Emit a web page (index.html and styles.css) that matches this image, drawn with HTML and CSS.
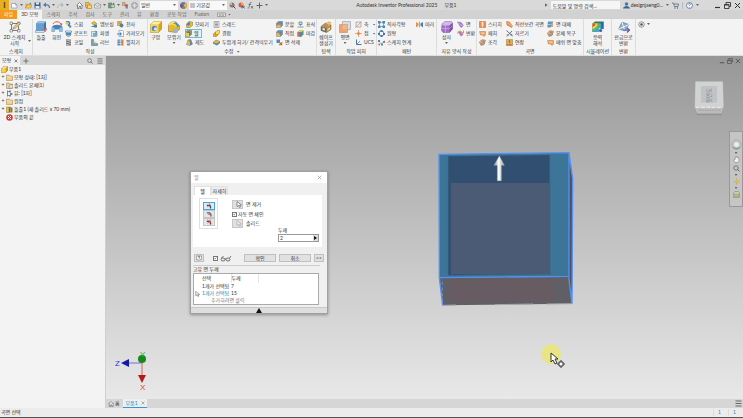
FILE: index.html
```html
<!DOCTYPE html>
<html lang="ko">
<head>
<meta charset="utf-8">
<title>Autodesk Inventor Professional 2025</title>
<meta name="viewport" content="width=device-width, initial-scale=1">
<link rel="stylesheet" href="styles.css">
</head>
<body>
<svg class="sprite" aria-hidden="true">
  <symbol id="new" viewBox="0 0 14 14"><path d="M1 3h8l3 3v6H1z" fill="#fafafa" stroke="#777"/><path d="M9 3v3h3" fill="none" stroke="#777"/></symbol>
  <symbol id="open" viewBox="0 0 14 14"><path d="M1 12V3h4l1 2h6v7z" fill="#e6a93a"/><path d="M1 12l3-6h10l-3 6z" fill="#ffcf5c" stroke="#9c7428"/><path d="M8 3l4-2v4" fill="#3d80b8"/></symbol>
  <symbol id="save" viewBox="0 0 14 14"><path d="M1 1h12v12H1z" fill="#39608c"/><path d="M4 1h6v4H4zM3 8h8v5H3z" fill="#e4edf5"/></symbol>
  <symbol id="undo" viewBox="0 0 14 14"><path d="M13 12c0-6-4-7-8-6" fill="none" stroke="#4679a8" stroke-width="2.4"/><path d="M0 6l6-5v9z" fill="#4679a8"/></symbol>
  <symbol id="redo" viewBox="0 0 14 14"><path d="M1 12c0-6 4-7 8-6" fill="none" stroke="#b5b8bb" stroke-width="2"/><path d="M14 6L8 1v9z" fill="#b5b8bb"/></symbol>
  <symbol id="home" viewBox="0 0 14 14"><path d="M1 7l6-6 6 6M3 6v7h3V9h3v4h3V6" fill="#f4f4f4" stroke="#555" stroke-width="1.3"/></symbol>
  <symbol id="parts" viewBox="0 0 14 14"><path d="M1 1h7l2 3v4H1z" fill="#f4bd35" stroke="#9a7420"/><path d="M5 6h8v7H5z" fill="#ffd657" stroke="#8c6c25"/><path d="M1 9l3 4" stroke="#d05a3c" stroke-width="2"/></symbol>
  <symbol id="mail" viewBox="0 0 14 14"><path d="M1 5l6-3 6 3v7H1zM1 5l6 4 6-4" fill="#e8eaeb" stroke="#777"/></symbol>
  <symbol id="update" viewBox="0 0 14 14"><path d="M1 2h7v10H1z" fill="#6f9d76" stroke="#54725b"/><path d="M6 5h7v6H6z" fill="#bfd5b6" stroke="#597960"/><path d="M10 1l3 3-3 2" fill="#2f75a1"/></symbol>
  <symbol id="select" viewBox="0 0 14 14"><path d="M1 1h5v6H1z" fill="#e8b852" stroke="#7b776d"/><circle cx="9" cy="7" r="3" fill="#d64b3b"/><path d="M7 9h5v4H7z" fill="#5c94c5"/></symbol>
  <symbol id="material" viewBox="0 0 14 14"><circle cx="7" cy="7" r="6" fill="#aeb1b3" stroke="#6f7274"/><path d="M7 1v12M1 7h12M3 3c3 3 5 3 8 0M3 11c3-3 5-3 8 0" fill="none" stroke="#f0f0f0"/></symbol>
  <symbol id="sphere" viewBox="0 0 14 14"><circle cx="7" cy="7" r="6.5" fill="#d94b3d"/><path d="M7 7L1 4a6.500 6.500 0 0 1 10-2z" fill="#3e8cc7"/><path d="M7 7l4-5a6.500 6.500 0 0 1 0 10z" fill="#edb93b"/><path d="M7 7l4 5a6.500 6.500 0 0 1-8 0z" fill="#59a05a"/><path d="M7 7l-4 5a6.500 6.500 0 0 1-2-8z" fill="#704e9c"/></symbol>
  <symbol id="adjust" viewBox="0 0 14 14"><circle cx="6" cy="6" r="5" fill="#4c89bc"/><path d="M6 6l5 0a5 5 0 0 1-5 5z" fill="#e95d45"/><path d="M1 6a5 5 0 0 1 5-5v5z" fill="#edb93b"/><path d="M8 8l5 5" stroke="#414f62" stroke-width="2"/></symbol>
  <symbol id="clear" viewBox="0 0 14 14"><circle cx="6" cy="6" r="5" fill="#d35e4a"/><path d="M6 1a5 5 0 0 1 5 5H6z" fill="#e7b345"/><path d="M6 10h7M8 8l5 5M13 8l-5 5" stroke="#355d99" stroke-width="1.5"/></symbol>
  <symbol id="fx" viewBox="0 0 14 14"><path d="M9 1C6 0 6 3 5 7s-1 6-4 5M3 5h5M8 8l4 5M12 8l-4 5" fill="none" stroke="#555" stroke-width="1.4"/></symbol>
  <symbol id="plus" viewBox="0 0 14 14"><path d="M7 1v12M1 7h12" stroke="#666" stroke-width="2"/></symbol>
  <symbol id="close" viewBox="0 0 14 14"><path d="M2 2l10 10M12 2L2 12" stroke="currentColor" stroke-width="2"/></symbol>
  <symbol id="restore" viewBox="0 0 14 14"><path d="M4 4V1h9v8h-3M1 5h9v8H1zM1 6h9" fill="none" stroke="currentColor" stroke-width="1.8"/></symbol>
  <symbol id="minimize" viewBox="0 0 14 14"><path d="M2 11h10" stroke="currentColor" stroke-width="2.4"/></symbol>
  <symbol id="user" viewBox="0 0 14 14"><circle cx="7" cy="4" r="3.500" fill="#4478ab"/><path d="M0 13c1-7 13-7 14 0z" fill="#376899"/></symbol>
  <symbol id="cart" viewBox="0 0 14 14"><path d="M0 2h3l2 7h7l1-5H4" fill="none" stroke="#4c657c" stroke-width="1.500"/><circle cx="6" cy="12" r="1.300" fill="#4c657c"/><circle cx="11" cy="12" r="1.300" fill="#4c657c"/></symbol>
  <symbol id="help" viewBox="0 0 14 14"><circle cx="7" cy="7" r="6" fill="#f5f8fa" stroke="#476f95" stroke-width="1.500"/><path d="M5 5c0-3 5-2 4 0L7 7v1M7 10v1" fill="none" stroke="#476f95" stroke-width="1.500"/></symbol>
  <symbol id="help-box" viewBox="0 0 14 14"><path d="M1 2h12v9H9l-2 2-2-2H1z" fill="#f7f7f7" stroke="#555"/><path d="M5 5c0-3 5-2 4 0L7 7v1M7 9v1" fill="none" stroke="#444" stroke-width="1.500"/></symbol>
  <symbol id="camera" viewBox="0 0 18 14"><path d="M1 4h16v7H1z" fill="#eee" stroke="#666"/><circle cx="6" cy="7.500" r="2" fill="none" stroke="#666"/><circle cx="12" cy="7.500" r="2" fill="none" stroke="#666"/></symbol>

  <symbol id="sketch" viewBox="0 0 24 24"><path d="M3 5h17M5 2v19M3 19h17M19 9v12" fill="none" stroke="#555" stroke-width="1.500"/><path d="M2 2h5v5H2zM17 2h5v5h-5zM2 17h5v5H2zM17 17h5v5h-5z" fill="#eee" stroke="#555"/><path d="M8 16l1-4L20 2l3 3-11 10z" fill="#eec778" stroke="#6c6557"/></symbol>
  <symbol id="extrude" viewBox="0 0 24 24"><path d="M1 19l6-5h16v4l-5 5H1z" fill="#d4e3ef" stroke="#70869b"/><path d="M2 5l4-4h16v15l-4 4H2z" fill="#3973ae"/><path d="M2 5h16v15H2z" fill="#659dcd"/><path d="M2 5l4-4h16l-4 4z" fill="#9cc5e8"/><path d="M20 22v-7M18 17l2-3 3 3" stroke="#dd4a38" fill="none" stroke-width="2"/></symbol>
  <symbol id="revolve" viewBox="0 0 24 24"><path d="M2 12C4 6 20 6 23 12v9l-6 1v-5H7v5l-6-1z" fill="#4582b9"/><path d="M1 12l6 2v8l-6-1zM17 14l6-2v9l-6 1z" fill="#8fbde0"/><path d="M4 6C7 0 17 0 20 6" fill="none" stroke="#de5944" stroke-width="2"/><path d="M17 5h6l-2 5z" fill="#de5944"/></symbol>
  <symbol id="sweep" viewBox="0 0 14 14"><path d="M2 2c5-3 10 3 5 6l5 4" fill="none" stroke="#347eb8" stroke-width="3"/><circle cx="4" cy="4" r="3" fill="#f0c238"/><circle cx="10" cy="11" r="2.500" fill="#5796c7"/></symbol>
  <symbol id="loft" viewBox="0 0 14 14"><path d="M1 2h12l-2 9-4 2-4-2z" fill="#418cc6" stroke="#376b99"/><path d="M2 2h10v3H2z" fill="#b5d8ef"/><path d="M4 10h6v3H4z" fill="#e6b438"/></symbol>
  <symbol id="coil" viewBox="0 0 14 14"><path d="M2 1h10v12H2z" fill="#666"/><path d="M2 4l10-2M2 8l10-3M2 12l10-3" stroke="#ddd" stroke-width="1.500"/></symbol>
  <symbol id="emboss" viewBox="0 0 14 14"><path d="M1 4l6-3 5 5-5 4z" fill="#eab630" stroke="#917521"/><path d="M6 7l6 1v5H6z" fill="#4782b2"/><path d="M1 11h5" stroke="#4a9757" stroke-width="2"/></symbol>
  <symbol id="derive" viewBox="0 0 14 14"><path d="M1 3h10v10H1z" fill="#dbe6ec" stroke="#607d90"/><path d="M4 6h9v6H4z" fill="#7eaac8"/><path d="M9 1l4 3-4 3z" fill="#4281ac"/></symbol>
  <symbol id="rib" viewBox="0 0 14 14"><path d="M1 1h4v8h8v4H1z" fill="#6da1cb" stroke="#486b89"/><path d="M5 3l6 6H5z" fill="#edbd3b"/></symbol>
  <symbol id="decal" viewBox="0 0 14 14"><path d="M1 1h8v8H1z" fill="#e5c35a" stroke="#857451"/><circle cx="9" cy="9" r="4" fill="#5685aa"/><path d="M4 3l4 4" stroke="#c54c38" stroke-width="2"/></symbol>
  <symbol id="import" viewBox="0 0 14 14"><path d="M4 1h7l2 2v10H4z" fill="#f5f7f8" stroke="#678"/><path d="M0 7h6V4l4 4-4 4V9H0z" fill="#3d89b4"/></symbol>
  <symbol id="unwrap" viewBox="0 0 14 14"><path d="M1 1h6v12H1z" fill="#5c91be"/><path d="M8 1h5v12H8z" fill="#d97e43"/><path d="M3 4h7M3 9h7" stroke="#fff"/></symbol>
  <symbol id="hole" viewBox="0 0 24 24"><path d="M1 7l6-6h16v15l-6 7H1z" fill="#d9a319" stroke="#7b6c39"/><path d="M1 7h16v16H1z" fill="#ffd84c"/><path d="M1 7l6-6h16l-6 6z" fill="#fff09a"/><circle cx="9" cy="15" r="5.500" fill="#5089b8"/><circle cx="11" cy="16" r="3.500" fill="#cbe3f4"/></symbol>
  <symbol id="fillet" viewBox="0 0 24 24"><path d="M1 21V9C3 1 12 1 16 2l7 7v8l-7 6z" fill="#edb826" stroke="#766b45"/><path d="M1 9C3 1 12 1 16 2l7 7-7 3C14 6 7 6 1 9z" fill="#ffe66a"/><path d="M9 5c6 0 9 4 9 9l5-5-7-7z" fill="#5b91bb"/><path d="M10 15h10v8H10z" fill="#91b9d5"/></symbol>
  <symbol id="chamfer" viewBox="0 0 14 14"><path d="M1 6l5-5 7 1v7l-5 4H1z" fill="#efbd2e" stroke="#847132"/><path d="M1 7l5-6 3 5-4 4z" fill="#4a85ba"/></symbol>
  <symbol id="shell" viewBox="0 0 14 14"><path d="M1 4l4-3h8v8l-4 4H1z" fill="#c69835" stroke="#57636b"/><path d="M1 4h8v9H1z" fill="#f1cb51"/><path d="M3 3h8v6L8 11V6H3z" fill="#477fae"/></symbol>
  <symbol id="draft" viewBox="0 0 14 14"><path d="M1 11l3-9 5-1 4 9-5 3z" fill="#5a91be" stroke="#547287"/><path d="M4 2l4 3v8l-7-2z" fill="#e2b948"/><path d="M10 2v10" stroke="#c54f3c"/></symbol>
  <symbol id="thread" viewBox="0 0 14 14"><path d="M2 1h10v12H2z" fill="#eee" stroke="#777"/><path d="M4 4h6M4 7h6M4 10h6" stroke="#777" stroke-width="1.500"/></symbol>
  <symbol id="combine" viewBox="0 0 14 14"><path d="M1 8l4-4h6v4l-4 5H1z" fill="#e3a816" stroke="#8b7427"/><path d="M5 4l3-3h5v5l-3 3H5z" fill="#ffda4f" stroke="#8b7427"/></symbol>
  <symbol id="thicken" viewBox="0 0 14 14"><path d="M0 7l6-5 8 3-6 7z" fill="#ebb838" stroke="#786d4d"/><path d="M0 7l8 2 6-4v3l-6 5-8-4z" fill="#5186b1"/></symbol>
  <symbol id="split" viewBox="0 0 14 14"><path d="M1 4l4-3h8v8l-4 4H1z" fill="#5a94c3" stroke="#54748c"/><path d="M1 7h8v6H1z" fill="#edc044"/><path d="M0 9l13-5" stroke="#d65e48" stroke-width="1.600"/></symbol>
  <symbol id="direct" viewBox="0 0 14 14"><path d="M1 4l3-3h9v8l-4 4H1z" fill="#5a94c3" stroke="#587893"/><path d="M1 6h7v7H1z" fill="#edc044"/><path d="M5 9l5-4" stroke="#d64f3c" stroke-width="2"/></symbol>
  <symbol id="delete-face" viewBox="0 0 14 14"><path d="M1 1h7v7H1z" fill="#4d8bb9"/><path d="M6 6h7v7H6z" fill="#e2c372"/><path d="M7 7l5 5M12 7l-5 5" stroke="#c94335" stroke-width="2"/></symbol>
  <symbol id="mark" viewBox="0 0 14 14"><path d="M4 2h6v5H4zM7 7v3M1 12h12" fill="#d5dce2" stroke="#647b8b" stroke-width="1.500"/></symbol>
  <symbol id="finish" viewBox="0 0 14 14"><path d="M1 4l4-3h8v8l-4 4H1z" fill="#4d9d70"/><path d="M1 4h8v9H1z" fill="#e86b50"/><path d="M1 4l4-3h8L9 4z" fill="#edcf4c"/><path d="M5 4h4v9H5z" fill="#4d83bd"/></symbol>
  <symbol id="shape" viewBox="0 0 24 24"><path d="M2 11l9-7 11 4v9l-9 6-11-4z" fill="#b8914e" stroke="#5f6057"/><path d="M2 11l11 3v9L2 19z" fill="#666f70"/><path d="M5 13l5 2v4l-5-1zM15 16l5-3v3l-5 4z" fill="#f2dda8"/><circle cx="18" cy="5" r="4" fill="#ef923f"/><path d="M18 0v10M13 5h10" stroke="#ffe39b"/></symbol>
  <symbol id="plane" viewBox="0 0 24 24"><path d="M7 1h16v16H7z" fill="#d9dce0" stroke="#888"/><path d="M1 7h16v16H1z" fill="#f2a16c" stroke="#c17845"/><path d="M7 7h10v10H7z" fill="#e4b997"/></symbol>
  <symbol id="axis" viewBox="0 0 14 14"><path d="M2 2h10v10H2z" fill="#eee" stroke="#777"/><path d="M1 13L13 1" stroke="#df8c4c" stroke-width="1.500"/></symbol>
  <symbol id="point" viewBox="0 0 14 14"><path d="M7 0v14M0 7h14" stroke="#e49259" stroke-width="1.500"/><path d="M7 3l4 4-4 4-4-4z" fill="#e98b4c"/></symbol>
  <symbol id="ucs" viewBox="0 0 14 14"><path d="M3 1v10h10" fill="none" stroke="#377bb1" stroke-width="2"/><path d="M3 11l7-7" stroke="#c56445" stroke-width="1.500"/></symbol>
  <symbol id="rect-pattern" viewBox="0 0 14 14"><path d="M3 3h8v8H3z" fill="none" stroke="#4b6f91"/><path d="M0 0h5v5H0zM9 0h5v5H9zM0 9h5v5H0zM9 9h5v5H9z" fill="#4887ba"/></symbol>
  <symbol id="circle-pattern" viewBox="0 0 14 14"><circle cx="7" cy="7" r="5" fill="none" stroke="#578bb4" stroke-width="2"/><path d="M5 0h4v4H5zM0 6h4v4H0zM10 6h4v4h-4zM5 10h4v4H5z" fill="#397cac"/></symbol>
  <symbol id="sketch-pattern" viewBox="0 0 14 14"><path d="M1 11c2-8 6 4 12-8" fill="none" stroke="#666"/><path d="M0 2h4v4H0zM6 9h4v4H6z" fill="#478abd"/><path d="M10 4h4v4h-4zM1 10h3v3H1z" fill="#dc6949"/></symbol>
  <symbol id="mirror" viewBox="0 0 14 14"><path d="M0 2l5 3v4l-5 4z" fill="#e49245"/><path d="M14 2L9 5v4l5 4z" fill="#467fb9"/><path d="M7 1v12" stroke="#555"/></symbol>
  <symbol id="box" viewBox="0 0 24 24"><path d="M2 6l6-5h13l2 3v12l-6 7H4l-3-4z" fill="#a171c5" stroke="#73518d"/><path d="M2 6l6-5h13l2 3-6 5H3z" fill="#d4b4ee"/><path d="M17 9l6-5v12l-6 7z" fill="#7b549f"/><path d="M9 8v15M1 15h16l6-6M6 3l11 4" fill="none" stroke="#e0c4f3"/></symbol>
  <symbol id="ff-face" viewBox="0 0 14 14"><path d="M1 2l7 1 5 6-5 4z" fill="#a87cc9" stroke="#72579a"/><path d="M1 2l7 6 5 1" fill="none" stroke="#eee"/></symbol>
  <symbol id="convert" viewBox="0 0 14 14"><path d="M1 3h6l6 6-5 4z" fill="#aa7fc5"/><path d="M1 7c2-6 8-6 10-1M8 6h5V1" fill="none" stroke="#e48a45" stroke-width="2"/></symbol>
  <symbol id="stitch" viewBox="0 0 14 14"><path d="M1 1h12v12H1z" fill="#e98b4a" stroke="#b96532"/><path d="M7 1v12M4 4h6M4 8h6" stroke="#fff" stroke-width="1.300"/></symbol>
  <symbol id="patch" viewBox="0 0 14 14"><path d="M1 3h12v7l-3 3-3-3H3z" fill="#eda05d" stroke="#c0763d"/><path d="M3 5h8v3H5z" fill="#f9ca99"/></symbol>
  <symbol id="sculpt" viewBox="0 0 14 14"><path d="M1 7c2-6 7-7 12-4l-3 8-6 2z" fill="#e79655" stroke="#ae693a"/><circle cx="8" cy="8" r="3.500" fill="#6897b4"/><path d="M2 5l8 4" stroke="#ffddb7"/></symbol>
  <symbol id="ruled" viewBox="0 0 14 14"><path d="M1 1l6 1 6 8-2 3-9-5z" fill="#e98948" stroke="#b86b3d"/><path d="M2 3l9 8M5 3l7 6" stroke="#ffd3a8"/></symbol>
  <symbol id="trim" viewBox="0 0 14 14"><path d="M1 1l12 11M2 13L12 2" stroke="#55728d" stroke-width="2"/><circle cx="3" cy="10" r="2" fill="#db8753"/><circle cx="11" cy="10" r="2" fill="#4c90be"/></symbol>
  <symbol id="extend" viewBox="0 0 14 14"><path d="M1 1h12v12H1z" fill="#e1b24c" stroke="#8c784b"/><path d="M1 10h12v3H1z" fill="#d87a4b"/><path d="M7 9V3M5 5l2-2 2 2" stroke="#45545c" fill="none"/></symbol>
  <symbol id="replace" viewBox="0 0 14 14"><path d="M2 1h11L9 7H1zM1 8h9l-3 5H1z" fill="#5f96bd"/><path d="M10 4v8" stroke="#e48b45" stroke-width="3"/></symbol>
  <symbol id="stress" viewBox="0 0 24 24"><path d="M1 5l5-4h17v15l-5 6H1z" fill="#36785d"/><path d="M1 5h17v17H1z" fill="#47a4cc"/><path d="M1 5h14C14 13 9 18 1 20z" fill="#69bd4e"/><path d="M1 5h10C10 11 7 14 1 16z" fill="#f3db3e"/><path d="M1 5h6c0 4-2 6-6 7z" fill="#e65335"/><path d="M18 5l5-4v15l-5 6z" fill="#3267ae"/><path d="M14 15l9 7M14 22l9-6" stroke="#e9edf2" stroke-width="3"/><circle cx="17" cy="19" r="3" fill="#356a9b"/></symbol>
  <symbol id="sheetmetal" viewBox="0 0 24 24"><path d="M1 16L8 2l14 5-8 13z" fill="#82add0" stroke="#526f8a"/><path d="M8 2l3 10 11-5M1 16l10-4 3 8" fill="none" stroke="#eef5fa" stroke-width="2"/><path d="M11 18h11M18 14l5 4-5 5" fill="none" stroke="#665d9d" stroke-width="2.500"/></symbol>
  <symbol id="target" viewBox="0 0 14 14"><circle cx="7" cy="7" r="5.500" fill="#eee" stroke="#777" stroke-width="1.500"/><circle cx="7" cy="7" r="2.500" fill="#555"/></symbol>

  <symbol id="part" viewBox="0 0 14 14"><path d="M1 5l4-4h8v8l-4 4H1z" fill="#d59f1e" stroke="#826624"/><path d="M1 5h8v8H1z" fill="#ffd045"/><path d="M1 5l4-4h8L9 5z" fill="#ffe891"/></symbol>
  <symbol id="folder" viewBox="0 0 14 14"><path d="M1 2h5l1 2h6v9H1z" fill="#efcf91" stroke="#9b7b4d"/><path d="M2 6h10" stroke="#fff0cb"/></symbol>
  <symbol id="bodies" viewBox="0 0 14 14"><path d="M1 2h5l1 2h6v9H1z" fill="#efcf91" stroke="#9b7b4d"/><path d="M6 8l3-3h5v5l-3 3H6z" fill="#d9dcdd" stroke="#777"/></symbol>
  <symbol id="views" viewBox="0 0 14 14"><path d="M3 1v12M3 3h4M3 11h4" stroke="#526d82" stroke-width="1.500"/><path d="M6 1h4v4H6zM8 6h5v4H8zM6 10h4v3H6z" fill="#718da1"/></symbol>
  <symbol id="extrusion" viewBox="0 0 14 14"><path d="M1 2h5v11H1z" fill="#f0c43b" stroke="#8b7426"/><path d="M6 2l3-1v12H6z" fill="#b34c35"/><path d="M9 3h4v10H9z" fill="#588f57"/></symbol>
  <symbol id="end" viewBox="0 0 14 14"><circle cx="7" cy="7" r="6.500" fill="#cf3d39"/><path d="M4 4l6 6M10 4l-6 6" stroke="#fff" stroke-width="2"/></symbol>
  <symbol id="search" viewBox="0 0 14 14"><circle cx="6" cy="6" r="4.500" fill="none" stroke="#666" stroke-width="1.600"/><path d="M9 9l4 4" stroke="#666" stroke-width="2"/></symbol>
  <symbol id="menu" viewBox="0 0 14 14"><path d="M1 2h12M1 7h12M1 12h12" stroke="#666" stroke-width="2"/></symbol>
  <symbol id="pointer" viewBox="0 0 14 14"><path d="M4 1v10l3-2 2 4 2-1-2-4h4z" fill="#fff" stroke="currentColor"/></symbol>
  <symbol id="shell-in" viewBox="0 0 14 14"><path d="M2 4h7l3 3v6H9V8L7 7H2z" fill="#354a60"/><path d="M3 9l4-3M8 1l2 5" stroke="#df4c40" stroke-width="2"/></symbol>
  <symbol id="shell-out" viewBox="0 0 14 14"><path d="M2 3h7l4 4v6h-3V8L8 6H2z" fill="#536373"/><path d="M6 9l4-4" stroke="#df4c40" stroke-width="2.500"/></symbol>
  <symbol id="shell-both" viewBox="0 0 14 14"><path d="M2 4h7l3 3v6H9V8L7 7H2z" fill="#354a60"/><path d="M3 2l9 8M11 1L4 10" stroke="#df4c40" stroke-width="2"/></symbol>
  <symbol id="glasses" viewBox="0 0 22 14"><ellipse cx="5" cy="9" rx="4" ry="3" fill="none" stroke="#444" stroke-width="1.500"/><ellipse cx="15" cy="9" rx="4" ry="3" fill="none" stroke="#444" stroke-width="1.500"/><path d="M9 8h2M2 6l4-4M18 6l3-4" stroke="#444" stroke-width="1.500" fill="none"/></symbol>
  <symbol id="wheel" viewBox="0 0 24 24"><circle cx="12" cy="12" r="10" fill="#c9cbc9" stroke="#888"/><circle cx="12" cy="12" r="6" fill="#eee" stroke="#aaa"/><path d="M4 18c5 4 11 4 16 0" fill="none" stroke="#75a980" stroke-width="3"/></symbol>
  <symbol id="hand" viewBox="0 0 14 14"><path d="M4 13L1 8l2-1 1 1V3h2V1h2v2h2v1h2v6l-2 3z" fill="#eee" stroke="#777"/></symbol>
  <symbol id="orbit" viewBox="0 0 14 14"><path d="M7 1v12M2 9c3-5 8-5 11 0" fill="none" stroke="#777"/><path d="M7 2l5 5-5 4-5-4z" fill="#e5bd3c"/></symbol>
  <symbol id="look" viewBox="0 0 14 14"><path d="M1 4l3-3h7l2 3v9H1z" fill="#cfd0c8" stroke="#777"/><path d="M3 6h8v5H3z" fill="#d2bb5c" stroke="#848a75"/></symbol>
</svg>

<div class="app">
  <header class="titlebar">
    <div class="quick">
      <button class="logo" aria-label="Inventor">I</button>
      <button class="ic" aria-label="새로 만들기"><svg><use href="#new"/></svg></button><i class="caret"></i>
      <button class="ic" aria-label="열기"><svg><use href="#open"/></svg></button>
      <button class="ic" aria-label="저장"><svg><use href="#save"/></svg></button>
      <button class="ic" aria-label="명령취소"><svg><use href="#undo"/></svg></button><i class="caret"></i>
      <button class="ic" aria-label="명령복구"><svg><use href="#redo"/></svg></button><i class="caret"></i>
      <i class="divider"></i>
      <button class="ic" aria-label="홈"><svg><use href="#home"/></svg></button>
      <button class="ic" aria-label="부품"><svg><use href="#parts"/></svg></button>
      <button class="ic" aria-label="공유"><svg><use href="#mail"/></svg></button><i class="caret"></i>
      <button class="ic" aria-label="업데이트"><svg><use href="#update"/></svg></button><i class="caret"></i>
      <button class="ic" aria-label="선택"><svg><use href="#select"/></svg></button>
      <button class="ic" aria-label="재질"><svg><use href="#material"/></svg></button>
      <span class="combo"><select aria-label="재질 이름"><option>일반</option></select></span>
      <button class="ic" aria-label="모양"><svg><use href="#sphere"/></svg></button>
      <span class="combo"><select aria-label="모양 이름"><option>▤ 기본값</option></select></span>
      <button class="ic" aria-label="조정"><svg><use href="#adjust"/></svg></button>
      <button class="ic" aria-label="지우기"><svg><use href="#clear"/></svg></button>
      <button class="ic" aria-label="매개변수"><svg><use href="#fx"/></svg></button>
      <button class="ic" aria-label="추가"><svg><use href="#plus"/></svg></button><i class="caret"></i>
    </div>
    <div class="title"><span>Autodesk Inventor Professional 2025</span><span>부품1</span></div>
    <div class="account">
      <i class="caret side"></i>
      <input type="search" aria-label="검색" value="도움말 및 명령 검색...">
      <button class="user"><svg><use href="#user"/></svg>designjaeng0...</button><i class="caret"></i>
      <button class="ic" aria-label="스토어"><svg><use href="#cart"/></svg></button><i class="rule"></i>
      <button class="ic" aria-label="도움말"><svg><use href="#help"/></svg></button><i class="caret"></i>
      <div class="window">
        <button class="ic" aria-label="최소화"><svg><use href="#minimize"/></svg></button>
        <button class="ic" aria-label="복원"><svg><use href="#restore"/></svg></button>
        <button class="ic" aria-label="닫기"><svg><use href="#close"/></svg></button>
      </div>
    </div>
  </header>

  <nav class="tabs">
    <button class="file">파일</button><button class="active">3D 모형</button><button>스케치</button><button>주석</button><button>검사</button><button>도구</button><button>관리</button><button>뷰</button><button>환경</button><button>공동 작업</button><button>Fusion</button>
    <button class="cam" aria-label="화면"><svg><use href="#camera"/></svg></button><i class="caret"></i>
  </nav>

  <div class="ribbon">
    <section class="panel p-sketch"><div class="tools">
      <button class="big"><svg><use href="#sketch"/></svg><span>2D 스케치<br>시작</span></button><i class="caret"></i>
    </div><h2>스케치</h2></section>
    <section class="panel p-create"><div class="tools">
      <button class="big"><svg><use href="#extrude"/></svg><span>돌출</span></button>
      <button class="big"><svg><use href="#revolve"/></svg><span>회전</span></button>
      <div class="stack"><button><svg><use href="#sweep"/></svg>스윕</button><button><svg><use href="#loft"/></svg>로프트</button><button><svg><use href="#coil"/></svg>코일</button></div>
      <div class="stack"><button><svg><use href="#emboss"/></svg>엠보싱</button><button><svg><use href="#derive"/></svg>파생</button><button><svg><use href="#rib"/></svg>리브</button></div>
      <div class="stack"><button><svg><use href="#decal"/></svg>전사</button><button><svg><use href="#import"/></svg>가져오기</button><button><svg><use href="#unwrap"/></svg>펼치기</button></div>
    </div><h2>작성</h2></section>
    <section class="panel p-modify"><div class="tools">
      <button class="big"><svg><use href="#hole"/></svg><span>구멍</span></button>
      <button class="big"><svg><use href="#fillet"/></svg><span>모깎기</span><i class="caret"></i></button>
      <div class="stack"><button><svg><use href="#chamfer"/></svg>모따기</button><button class="current"><svg><use href="#shell"/></svg>쉘</button><button><svg><use href="#draft"/></svg>제도</button></div>
      <div class="stack"><button><svg><use href="#thread"/></svg>스레드</button><button><svg><use href="#combine"/></svg>결합</button><button><svg><use href="#thicken"/></svg>두껍게 하기/ 간격띄우기</button></div>
      <div class="stack"><button><svg><use href="#split"/></svg>분할</button><button><svg><use href="#direct"/></svg>직접</button><button><svg><use href="#delete-face"/></svg>면 삭제</button></div>
      <div class="stack"><button><svg><use href="#mark"/></svg>표식</button><button><svg><use href="#finish"/></svg>마감</button></div>
    </div><h2>수정 <i class="caret"></i></h2></section>
    <section class="panel p-explore"><div class="tools">
      <button class="big"><svg><use href="#shape"/></svg><span>쉐이프<br>생성기</span></button>
    </div><h2>탐색</h2></section>
    <section class="panel p-work"><div class="tools">
      <button class="big"><svg><use href="#plane"/></svg><span>평면</span><i class="caret"></i></button>
      <div class="stack"><button><svg><use href="#axis"/></svg>축 <i class="caret"></i></button><button><svg><use href="#point"/></svg>점 <i class="caret"></i></button><button><svg><use href="#ucs"/></svg>UCS</button></div>
    </div><h2>작업 피처</h2></section>
    <section class="panel p-pattern"><div class="tools">
      <div class="stack"><button><svg><use href="#rect-pattern"/></svg>직사각형</button><button><svg><use href="#circle-pattern"/></svg>원형</button><button><svg><use href="#sketch-pattern"/></svg>스케치 연계</button></div>
      <div class="stack"><button><svg><use href="#mirror"/></svg>미러</button></div>
    </div><h2>패턴</h2></section>
    <section class="panel p-free"><div class="tools">
      <button class="big"><svg><use href="#box"/></svg><span>상자</span><i class="caret"></i></button>
      <div class="stack"><button><svg><use href="#ff-face"/></svg>면</button><button><svg><use href="#convert"/></svg>변환</button></div>
    </div><h2>자유 양식 작성</h2></section>
    <section class="panel p-surface"><div class="tools">
      <div class="stack"><button><svg><use href="#stitch"/></svg>스티치</button><button><svg><use href="#patch"/></svg>패치</button><button><svg><use href="#sculpt"/></svg>조각</button></div>
      <div class="stack"><button><svg><use href="#ruled"/></svg>직선보간 곡면</button><button><svg><use href="#trim"/></svg>자르기</button><button><svg><use href="#extend"/></svg>연장</button></div>
      <div class="stack"><button><svg><use href="#replace"/></svg>면 대체</button><button><svg><use href="#sculpt"/></svg>본체 복구</button><button><svg><use href="#patch"/></svg>메쉬 면 맞춤</button></div>
    </div><h2>곡면</h2></section>
    <section class="panel p-sim"><div class="tools">
      <button class="big"><svg><use href="#stress"/></svg><span>응력<br>해석</span></button>
    </div><h2>시뮬레이션</h2></section>
    <section class="panel p-convert"><div class="tools">
      <button class="big"><svg><use href="#sheetmetal"/></svg><span>판금으로<br>변환</span></button>
    </div><h2>변환</h2></section>
    <div class="extra"><button class="ic" aria-label="표시"><svg><use href="#target"/></svg></button><i class="caret"></i></div>
  </div>

  <main class="work">
    <aside class="browser">
      <div class="browser-tabs"><button class="model-tab">모형 <svg><use href="#close"/></svg></button><button class="ic" aria-label="탭 추가"><svg><use href="#plus"/></svg></button><span class="push"></span><button class="ic" aria-label="찾기"><svg><use href="#search"/></svg></button><button class="ic" aria-label="메뉴"><svg><use href="#menu"/></svg></button></div>
      <ul class="tree">
        <li class="root"><svg><use href="#part"/></svg>부품1</li>
        <li><b>+</b><svg><use href="#folder"/></svg>모형 상태: [1차]</li>
        <li><b>+</b><svg><use href="#bodies"/></svg>솔리드 본체(1)</li>
        <li><b>+</b><svg><use href="#views"/></svg>뷰: [1차]</li>
        <li><b>+</b><svg><use href="#folder"/></svg>원점</li>
        <li><b>+</b><svg><use href="#extrusion"/></svg>돌출1 (새 솔리드 x 70 mm)</li>
        <li><b></b><svg><use href="#end"/></svg>부품의 끝</li>
      </ul>
    </aside>

    <div class="stage">
      <div class="viewport">
        <div class="doc-window"><button class="ic" aria-label="문서 최소화"><svg><use href="#minimize"/></svg></button><button class="ic" aria-label="문서 복원"><svg><use href="#restore"/></svg></button><button class="ic" aria-label="문서 닫기"><svg><use href="#close"/></svg></button></div>

        <svg class="viewcube" viewBox="0 0 96 108" role="img" aria-label="뷰 큐브">
          <path d="M6 86l6 16h72l6-16-4 20H12z" fill="#777" opacity=".4"/>
          <path d="M6 82h85l-5 18H12z" fill="#bcbcbc"/>
          <path d="M8 5h81l2 77H6z" fill="#d1d2d2" stroke="#dedede"/>
          <path d="M24 18h48v50H24z" fill="#bfc3c8"/>
          <path d="M8 82h81" stroke="#eee" stroke-width="3" stroke-dasharray="12 4"/>
          <path d="M15 91h68" stroke="#999" stroke-width="2" stroke-dasharray="5 2"/>
          <text transform="translate(55 70) rotate(-90)" class="cube-text">윗면도</text>
        </svg>

        <div class="navbar">
          <button class="wheel" aria-label="탐색 휠"><svg><use href="#wheel"/></svg></button><i class="caret"></i>
          <button class="ic" aria-label="초점이동"><svg><use href="#hand"/></svg></button>
          <button class="ic" aria-label="줌"><svg><use href="#search"/></svg></button><i class="caret"></i>
          <button class="ic" aria-label="궤도"><svg><use href="#orbit"/></svg></button><i class="caret"></i>
          <button class="ic" aria-label="면 보기"><svg><use href="#look"/></svg></button>
        </div>

        <svg class="model" viewBox="0 0 450 495" role="img" aria-label="솔리드 모형">
          <defs><linearGradient id="arrow"><stop offset="0" stop-color="#888"/><stop offset=".45" stop-color="#fff"/><stop offset="1" stop-color="#999"/></linearGradient></defs>
          <path d="M416 23l12 78-2 375-10-82z" fill="#4f5064"/>
          <path d="M28 398l388-4 10 82-388 5z" fill="#605f66"/>
          <path d="M57 402h308l3 64-306 4z" fill="#665c61" stroke="#765762"/>
          <path d="M27 28l390-5v371l-389 4z" fill="#3d7598"/>
          <path d="M54 34l305-4v357l-305 4z" fill="#315071"/>
          <path d="M63 114h296v273H63z" fill="#4b5b76"/>
          <path d="M55 35v356M359 30v357M56 390l308-3" fill="none" stroke="#36647f" stroke-width="2"/>
          <path d="M27 28l390-5v371l-389 4zM28 398l10 83M416 394l10 82M417 23l11 78-2 375" fill="none" stroke="#5591f1" stroke-width="4"/>
          <path d="M37 410v60" stroke="#7da2da" stroke-width="2" stroke-dasharray="10 7"/>
          <path d="M38 481l40-1M195 479l114-2M350 477l75-1" stroke="#a4a5ae" stroke-width="3"/>
          <path d="M202 107V61h-10l16-28 15 28h-9v46z" fill="url(#arrow)" stroke="#bbb"/>
        </svg>

        <svg class="triad" viewBox="0 0 40 50" role="img" aria-label="좌표축">
          <path d="M10 19h17" stroke="#7475ca"/><path d="M6 19l8-4v8z" fill="#1717a9"/>
          <path d="M27 19v14" stroke="#c66"/><path d="M23 31h8l-4 8z" fill="#b71919"/>
          <circle cx="27" cy="15" r="4" fill="#168820"/>
          <text x="25" y="13" fill="#21b22b">Y</text><text x="0" y="22" fill="#3333dd">Z</text><text x="25" y="46" fill="#ef3b2f">X</text>
        </svg>

        <svg class="cursor" viewBox="0 0 26 28" aria-hidden="true">
          <circle cx="11" cy="11" r="10" fill="#e9e485"/>
          <path d="M11 10v9l2-2 2 4 2-1-2-4h3z" fill="#fff" stroke="#333"/>
          <path d="M20 18h2v2h2v2h-2v2h-2v-2h-2v-2h2z" fill="#fff" stroke="#333"/>
        </svg>

        <form class="dialog">
          <div class="dialog-head"><span>쉘</span><button type="button" class="ic" aria-label="대화상자 닫기"><svg><use href="#close"/></svg></button></div>
          <div class="dialog-body">
            <div class="dialog-tabs"><button type="button" class="active">쉘</button><button type="button">자세히</button></div>
            <div class="page">
              <div class="modes">
                <button type="button" class="active" aria-label="내부"><svg><use href="#shell-in"/></svg></button>
                <button type="button" aria-label="외부"><svg><use href="#shell-out"/></svg></button>
                <button type="button" aria-label="양쪽"><svg><use href="#shell-both"/></svg></button>
              </div>
              <div class="picks">
                <div class="pick"><button type="button" id="remove"><svg><use href="#pointer"/></svg></button><label for="remove">면 제거</label></div>
                <label class="check"><input type="checkbox" checked>자동 면 체인</label>
                <div class="pick off"><button type="button" id="solid"><svg><use href="#pointer"/></svg></button><label for="solid">솔리드</label></div>
              </div>
              <div class="thickness"><label for="thick">두께</label><div class="field"><input id="thick" type="text" value="2"><button type="button" aria-label="두께 옵션"><i class="caret side"></i></button></div></div>
            </div>
            <div class="actions">
              <button type="button" class="tiny" aria-label="도움말"><svg><use href="#help-box"/></svg></button>
              <label class="check preview"><input type="checkbox" checked aria-label="미리보기"><svg><use href="#glasses"/></svg></label>
              <button type="button" class="wide">확인</button><button type="button" class="wide">취소</button><button type="button" class="tiny">&lt;&lt;</button>
            </div>
            <h3>고유 면 두께</h3>
            <div class="list">
              <table>
                <thead><tr><th></th><th>선택</th><th>두께</th><th></th></tr></thead>
                <tbody>
                  <tr><td></td><td>1개가 선택됨</td><td>7</td><td></td></tr>
                  <tr><td><svg><use href="#pointer"/></svg></td><td class="picked">1개가 선택됨</td><td>15</td><td></td></tr>
                  <tr><td></td><td class="hint" colspan="3">추가하려면 클릭</td></tr>
                </tbody>
              </table>
            </div>
          </div>
          <button type="button" class="fold" aria-label="접기"></button>
        </form>
      </div>
      <div class="doc-tabs"><button class="home-tab"><svg><use href="#home"/></svg>홈</button><button class="active">부품1 <svg><use href="#close"/></svg></button><span class="push"></span><button class="ic" aria-label="문서 메뉴"><svg><use href="#menu"/></svg></button></div>
    </div>
  </main>
  <footer class="status"><span>곡면 선택</span><span class="push"></span><span class="count">1</span><span class="count">1</span></footer>
</div>
</body>
</html>
```
FILE: styles.css
```css
* { box-sizing: border-box; }

body {
  margin: 0;
  font: 5px/7px Lato, "Noto Sans CJK KR", sans-serif;
  color: #333;
  background: #ececec;
}

button, input, select {
  margin: 0;
  padding: 0;
  border: 0;
  border-radius: 0;
  background: none;
  font: inherit;
  color: inherit;
  white-space: nowrap;
}

h2, h3, ul { margin: 0; padding: 0; font: inherit; list-style: none; }
svg { display: block; flex: none; width: 7px; height: 7px; }
.sprite { position: absolute; width: 0; height: 0; }
.push { flex: 1; }
.ic { flex: none; width: 7px; height: 7px; }

.caret {
  display: inline-block;
  flex: none;
  width: 3px;
  height: 2px;
  background: #666;
  clip-path: polygon(0 0, 100% 0, 50% 100%);
}
.caret.side { height: 4px; clip-path: polygon(0 0, 100% 50%, 0 100%); }

.app { display: flex; flex-direction: column; height: 100vh; overflow: hidden; }

/* Title bar */
.titlebar {
  display: flex;
  justify-content: space-between;
  align-items: center;
  height: 10px;
  background: #d9d9d9;
}
.quick, .account, .title, .window { display: flex; align-items: center; white-space: nowrap; }
.quick { gap: 2px; }
.logo { width: 9px; height: 10px; background: #e9ad20; color: #4e390b; font-weight: 700; font-size: 8px; }
.divider { width: 3px; }
.title { gap: 7px; }
.combo { display: flex; align-items: center; width: 38px; height: 9px; background: #f8f8f8; }
.combo select { flex: 1; min-width: 0; height: 9px; padding: 0 1px; appearance: none; }
.combo::after { content: ""; width: 3px; height: 2px; margin-right: 2px; background: #666; clip-path: polygon(0 0, 100% 0, 50% 100%); }
.account { gap: 3px; }
.account input { width: 69px; height: 8px; padding: 0 2px; background: #f5f5f5; appearance: none; outline: 0; }
.user { display: flex; align-items: center; gap: 1px; min-width: 39px; }
.rule { width: 1px; height: 7px; background: #bbb; }
.window { gap: 3px; margin-left: 12px; padding-right: 2px; }

/* Ribbon tabs */
.tabs { display: flex; align-items: center; height: 9px; background: #d2d2d2; }
.tabs > button { height: 9px; padding: 0 4px; color: #666; }
.tabs > .file { background: #f39a1f; color: #fff3dc; }
.tabs > .active { background: #f3f3f3; color: #444; }
.tabs > .cam { margin: 0 2px 0 4px; padding: 1px 0; }
.cam svg { width: 9px; }

/* Ribbon */
.ribbon { display: flex; height: 37px; background: #f3f3f3; border-bottom: 1px solid #dedede; }
.panel { display: flex; flex-direction: column; flex: none; border-right: 1px solid #dcdcdc; }
.panel h2 { height: 7px; text-align: center; white-space: nowrap; }
.panel h2 .caret, .stack .caret { margin-left: 2px; vertical-align: middle; }
.tools { display: grid; height: 29px; padding-top: 1px; }
.tools button { display: flex; }
.big { flex-direction: column; align-items: center; line-height: 6px; text-align: center; }
.big svg { width: 12px; height: 12px; margin: 1px 0; }
.big .caret { margin-top: 2px; }
.stack { display: grid; grid-template-rows: repeat(3, 9px); }
.stack button { align-items: center; gap: 2px; padding-left: 1px; }
.stack .current { width: 17px; padding-left: 0; background: #e3f3f6; outline: 1px solid #68bfd2; outline-offset: -1px; }
.p-sketch { width: 33px; }
.p-sketch .tools { grid-template-columns: 27px 3px; padding-left: 1px; }
.p-sketch .tools > .caret { margin-top: 20px; }
.p-create { width: 115px; }
.p-create .tools { grid-template-columns: 16px 15px 26px 26px 1fr; }
.p-modify { width: 169px; }
.p-modify .tools { grid-template-columns: 15px 22px 27px 63px 21px 1fr; }
.p-explore { width: 19px; }
.p-work { width: 41px; }
.p-work .tools { grid-template-columns: 18px 1fr; }
.p-pattern { width: 60px; }
.p-pattern .tools { grid-template-columns: 38px 1fr; }
.p-free { width: 40px; }
.p-free .tools { grid-template-columns: 19px 1fr; }
.p-surface { width: 107px; }
.p-surface .tools { grid-template-columns: 27px 41px 1fr; padding-left: 1px; }
.p-sim { width: 28px; }
.p-convert { width: 24px; }
.extra { display: flex; align-items: center; gap: 2px; height: 10px; padding-left: 2px; }

/* Work area */
.work { display: flex; flex: 1; min-height: 0; }
.browser { flex: none; width: 106px; background: #f3f3f3; border-right: 1px solid #d0d0d0; }
.browser-tabs { display: flex; align-items: center; gap: 3px; height: 9px; padding-right: 1px; background: #d6d6d6; }
.model-tab { display: flex; align-items: center; gap: 3px; height: 9px; width: 20px; padding-left: 2px; background: #f3f3f3; }
.model-tab svg, .doc-tabs .active svg { width: 4px; height: 4px; }
.browser-tabs .ic svg { width: 6px; height: 6px; }
.tree li { display: flex; align-items: center; gap: 1px; height: 8px; padding-left: 1px; white-space: nowrap; }
.tree b { width: 4px; font-weight: 400; text-align: center; }

.stage { display: flex; flex: 1; flex-direction: column; min-width: 0; }
.viewport {
  position: relative;
  flex: 1;
  overflow: hidden;
  background: linear-gradient(#979797, #e8e8e8);
}
.doc-window { position: absolute; top: 1px; right: 1px; display: flex; gap: 1px; color: #555; }
.doc-window svg { width: 6px; height: 6px; }
.viewcube { position: absolute; top: 24px; right: 18px; width: 32px; height: 36px; }
.cube-text { font-size: 17px; fill: #85888c; }
.navbar {
  position: absolute;
  top: 75px;
  right: 0;
  display: flex;
  flex-direction: column;
  align-items: center;
  gap: 2px;
  width: 14px;
  padding: 7px 0 8px;
  background: #c5c5c5;
  border: 1px solid #999;
}
.wheel, .wheel svg { width: 11px; height: 11px; }
.model { position: absolute; top: 89px; left: 324px; width: 150px; height: 165px; }
.triad { position: absolute; left: 9px; bottom: 5px; width: 40px; height: 50px; font: 8px "Liberation Sans", sans-serif; }
.cursor { position: absolute; top: 287px; left: 434px; width: 26px; height: 28px; }

/* Shell dialog */
.dialog {
  position: absolute;
  top: 115px;
  left: 84px;
  width: 138px;
  background: #f0f0f0;
  border: 1px solid #a0a0a0;
  box-shadow: 0 1px 3px #0005;
}
.dialog-head { display: flex; justify-content: space-between; align-items: center; height: 11px; padding: 0 3px; background: #fff; color: #999; }
.dialog-head svg { width: 5px; height: 5px; }
.dialog-body { padding: 3px 3px 2px 2px; }
.dialog-tabs { display: flex; padding-left: 1px; }
.dialog-tabs button { width: 17px; height: 9px; background: #ededed; border: 1px solid #e2e2e2; border-bottom: 0; }
.dialog-tabs .active { background: #fff; color: #222; }
.page {
  display: grid;
  grid-template-columns: 19px 40px 41px;
  grid-template-rows: 31px 16px;
  column-gap: 10px;
  height: 52px;
  padding: 3px 0 0 6px;
  margin-right: 2px;
  background: #fff;
}
.modes { display: flex; flex-direction: column; align-items: center; padding: 3px 2px; border: 1px solid #e0e0e0; }
.modes button { width: 12px; height: 8px; padding-left: 1px; background: #e5e5e5; border: 1px solid #c5c5c5; }
.modes .active { background: #d7edfa; border-color: #4ba4d5; }
.modes svg { width: 8px; height: 6px; }
.picks { display: flex; flex-direction: column; justify-content: space-between; padding: 2px 0 1px 4px; white-space: nowrap; }
.pick { display: flex; align-items: center; gap: 3px; }
.pick button { width: 11px; height: 9px; padding-left: 2px; background: #e1e1e1; border: 1px solid #c7c7c7; }
.pick.off svg { opacity: 0.4; }
.check { display: flex; align-items: center; gap: 1px; }
.check input { position: relative; width: 5px; height: 5px; appearance: none; background: #fff; border: 1px solid #777; }
.check input:checked::after { content: ""; position: absolute; inset: 0; background: #555; clip-path: polygon(0 50%, 40% 100%, 100% 10%, 40% 70%); }
.thickness { display: flex; flex-direction: column; grid-column: 3; grid-row: 2; margin-top: -2px; }
.field { display: flex; height: 8px; border: 1px solid #999; }
.field input { flex: 1; min-width: 0; padding: 0 1px; outline: 0; background: #fff; }
.field button { display: grid; place-items: center; width: 5px; background: #ddd; }
.field .caret { background: #111; }
.actions { display: flex; align-items: center; gap: 3px; padding: 7px 0 3px 1px; }
.actions > button { height: 8px; background: #e1e1e1; border: 1px solid #c0c0c0; }
.actions > .tiny { width: 10px; }
.tiny svg { width: 6px; height: 6px; margin: 0 1px; }
.actions > .wide { flex: 1; }
.preview { width: 34px; padding-left: 6px; }
.preview.check { gap: 2px; }
.preview svg { width: 12px; height: 7px; }
.dialog h3 { margin-right: 4px; border-top: 1px solid #ccc; color: #333; }
.list { margin-right: 5px; height: 32px; background: #fff; border: 1px solid #aaa; }
.list table { width: 100%; border-collapse: collapse; table-layout: fixed; }
.list th, .list td { height: 7px; padding: 0; font-weight: 400; text-align: left; white-space: nowrap; line-height: 7px; }
.list th { height: 9px; border-right: 1px solid #e5e5e5; }
.list th:nth-child(1) { width: 8px; border: 0; }
.list th:nth-child(2) { width: 29px; }
.list th:nth-child(3) { width: 27px; }
.list th:last-child { border: 0; }
.list svg { width: 6px; height: 6px; }
.list .picked { color: #3183ae; }
.list .hint { padding-left: 9px; color: #777; }
.fold { display: block; width: 100%; height: 6px; background: #dedede; border-top: 1px solid #c8c8c8; }
.fold::after { content: ""; display: block; width: 6px; height: 5px; margin: 0 auto; background: #111; clip-path: polygon(50% 0, 100% 100%, 0 100%); }

/* Document tabs and status */
.doc-tabs { display: flex; flex: none; align-items: center; height: 9px; padding-right: 1px; background: #d6d6d6; }
.doc-tabs > button { display: flex; align-items: center; }
.home-tab { width: 17px; padding-left: 2px; gap: 1px; }
.home-tab svg { width: 6px; height: 6px; }
.doc-tabs .active { justify-content: center; gap: 3px; width: 24px; height: 9px; background: #eee; color: #278ac0; border-bottom: 1px solid #2c9acf; }
.doc-tabs .active svg { color: #777; }
.status { display: flex; flex: none; align-items: center; height: 10px; padding-left: 1px; background: #ececec; border-bottom: 1px solid #555; }
.count { width: 15px; padding-left: 4px; border-left: 1px solid #ddd; color: #487da0; }
```
